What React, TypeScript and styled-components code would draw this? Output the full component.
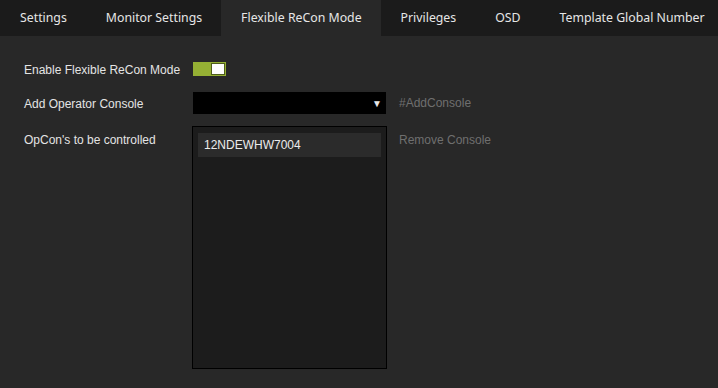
import * as React from 'react';
import styled, { createGlobalStyle } from 'styled-components';

const tabs = ['Settings', 'Monitor Settings', 'Flexible ReCon Mode', 'Privileges', 'OSD', 'Template Global Number'];
const consoles = ['12NDEWHW7004'];

const App: React.FC = () => {
  return (
    <Page>
      <GlobalStyle />
      <TabBar>
        {tabs.map((t) => (
          <Tab key={t} active={t === 'Flexible ReCon Mode'}>
            {t}
          </Tab>
        ))}
      </TabBar>
      <Content>
        <Row className="toggle-row">
          <Label>Enable Flexible ReCon Mode</Label>
          <Toggle on>
            <span className="knob" />
          </Toggle>
        </Row>
        <Row className="select-row">
          <Label>Add Operator Console</Label>
          <Select>
            <span className="arrow">▼</span>
          </Select>
          <Hint>#AddConsole</Hint>
        </Row>
        <Row className="list-row">
          <Label>OpCon's to be controlled</Label>
          <ListBox>
            {consoles.map((c) => (
              <ListItem key={c}>{c}</ListItem>
            ))}
          </ListBox>
          <Hint>Remove Console</Hint>
        </Row>
      </Content>
    </Page>
  );
};

const GlobalStyle = createGlobalStyle`
  html, body {
    margin: 0;
    padding: 0;
    background: #282828;
  }
`;

const Page = styled.div`
  width: 718px;
  height: 388px;
  background: #282828;
  overflow: hidden;
  font-family: 'Liberation Sans', Arial, sans-serif;
`;

const TabBar = styled.div`
  display: flex;
  height: 36px;
  background: #1b1b1b;
`;

const Tab = styled.div<{ active?: boolean }>`
  display: flex;
  align-items: center;
  padding: 0 19px 2px 20px;
  font-family: 'Noto Sans', 'Open Sans', sans-serif;
  font-size: 12.3px;
  color: #e6e6e6;
  background: ${(p) => (p.active ? '#282828' : 'transparent')};
  white-space: nowrap;
`;

const Content = styled.div`
  display: flex;
  flex-direction: column;
  padding: 26px 0 0 24px;

  .toggle-row {
    height: 14px;
    align-items: center;
    margin-bottom: 16px;
  }
  .select-row {
    height: 22px;
    align-items: center;
    margin-bottom: 12px;
  }
  .list-row {
    align-items: flex-start;
  }
`;

const Row = styled.div`
  display: flex;
`;

const Label = styled.div`
  width: 169px;
  font-size: 12px;
  color: #e4e4e4;
  padding-top: 1px;

  .list-row & {
    padding-top: 7px;
  }
`;

const Toggle = styled.div<{ on?: boolean }>`
  position: relative;
  width: 33px;
  height: 14px;
  background: ${(p) => (p.on ? '#95b034' : '#555')};
  box-sizing: border-box;

  .knob {
    position: absolute;
    top: 1px;
    right: 1px;
    width: 12px;
    height: 10px;
    background: #ffffff;
    border: 1px solid #4f5f1a;
  }
`;

const Select = styled.div`
  width: 193px;
  height: 22px;
  background: #000;
  display: flex;
  align-items: center;
  justify-content: flex-end;
  padding-right: 4px;
  box-sizing: border-box;

  .arrow {
    font-size: 10px;
    color: #e8e8e8;
  }
`;

const Hint = styled.div`
  margin-left: 13px;
  font-size: 12px;
  color: #6f6f6f;

  .list-row & {
    padding-top: 7px;
    margin-left: 12px;
  }
`;

const ListBox = styled.div`
  margin-left: -1px;
  width: 195px;
  height: 243px;
  box-sizing: border-box;
  border: 1px solid #000;
  background: #1c1c1c;
  padding: 6px 5px;
`;

const ListItem = styled.div`
  height: 24px;
  display: flex;
  align-items: center;
  padding-left: 6px;
  background: #2b2b2b;
  font-size: 12px;
  color: #ececec;
`;

export default App;
